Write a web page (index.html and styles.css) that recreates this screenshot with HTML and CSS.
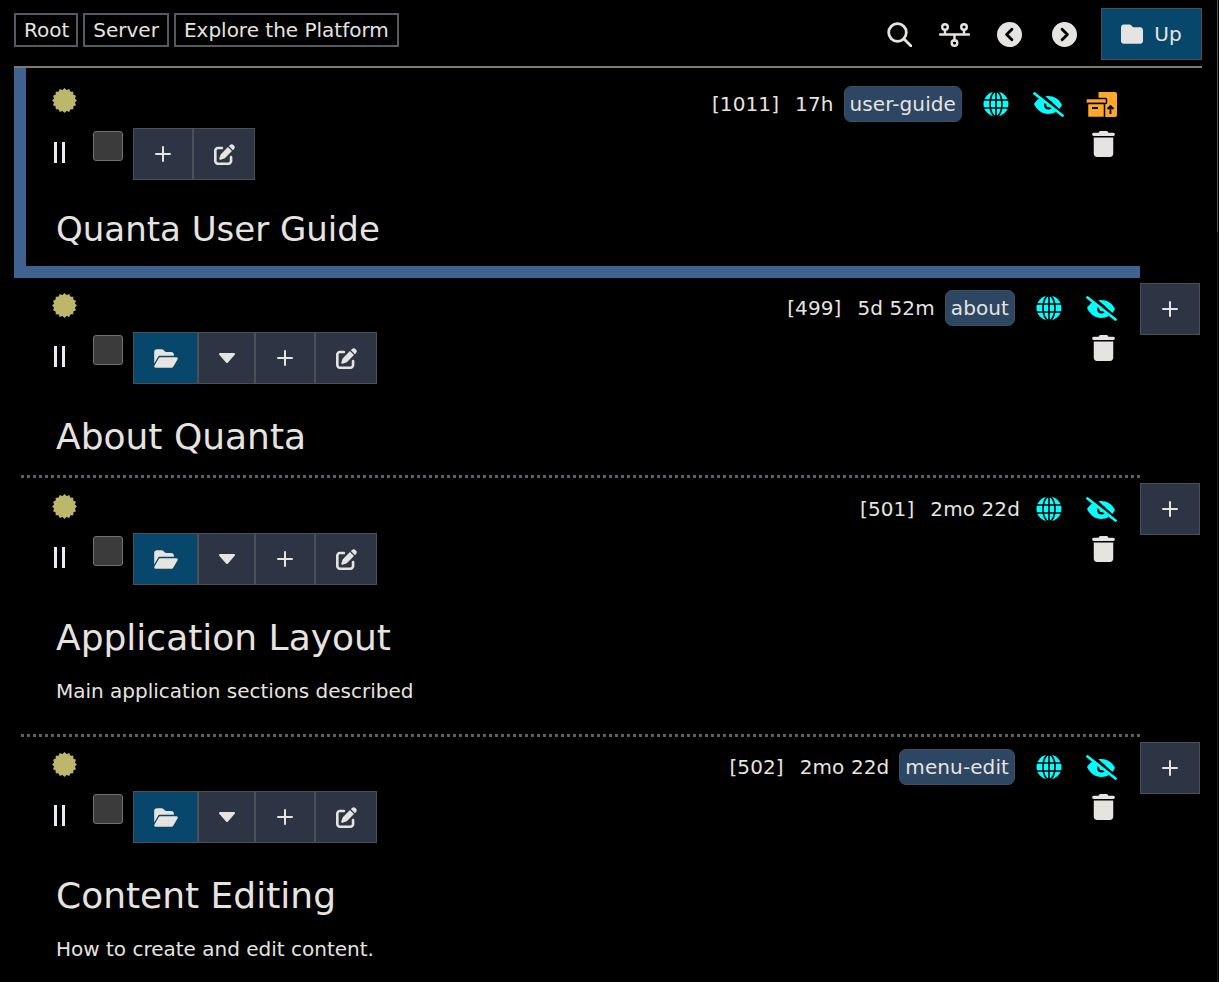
FILE: index.html
```html
<!DOCTYPE html>
<html lang="en">
<head>
    <meta charset="UTF-8">
    <title>Quanta User Guide</title>
    <link rel="stylesheet" href="styles.css">
</head>
<body>

<svg class="defs" width="0" height="0">
    <symbol id="star" viewBox="-12.5 -12.5 25 25">
        <circle r="10.5"/>
        <rect x="-8.800" y="-8.800" width="17.600" height="17.600"/>
        <rect x="-8.800" y="-8.800" width="17.600" height="17.600" transform="rotate(22.5)"/>
        <rect x="-8.800" y="-8.800" width="17.600" height="17.600" transform="rotate(45)"/>
        <rect x="-8.800" y="-8.800" width="17.600" height="17.600" transform="rotate(67.5)"/>
    </symbol>
    <symbol id="plus" viewBox="0 0 18 18">
        <path d="M9 2v14M2 9h14" fill="none" stroke="currentColor" stroke-width="2" stroke-linecap="round"/>
    </symbol>
    <symbol id="edit" viewBox="0 0 512 512">
        <path fill="currentColor" d="M471.6 21.7c-21.9-21.9-57.3-21.9-79.2 0L362.3 51.7l97.9 97.9 30.1-30.1c21.9-21.9 21.9-57.3 0-79.2L471.6 21.7zm-299.2 220c-6.1 6.1-10.8 13.6-13.5 21.9l-29.6 88.8c-2.9 8.6-.6 18.1 5.8 24.6s15.9 8.7 24.6 5.8l88.8-29.6c8.2-2.7 15.7-7.4 21.9-13.5L437.7 172.3 339.7 74.3 172.4 241.7zM96 64C43 64 0 107 0 160V416c0 53 43 96 96 96H352c53 0 96-43 96-96V320c0-17.7-14.3-32-32-32s-32 14.3-32 32v96c0 17.7-14.3 32-32 32H96c-17.7 0-32-14.3-32-32V160c0-17.7 14.3-32 32-32h96c17.7 0 32-14.3 32-32s-14.3-32-32-32H96z"/>
    </symbol>
    <symbol id="folder-open" viewBox="0 0 576 512">
        <path fill="currentColor" d="M88.7 223.8L0 375.8V96C0 60.7 28.7 32 64 32H181.5c17 0 33.3 6.7 45.3 18.7l26.5 26.5c12 12 28.3 18.7 45.3 18.7H416c35.3 0 64 28.7 64 64v32H144c-22.8 0-43.8 12.1-55.3 31.8zm27.6 16.1C122.1 230 132.6 224 144 224H544c11.5 0 22 6.1 27.7 16.1s5.7 22.2-.1 32.1l-112 192C453.9 474 443.4 480 432 480H32c-11.5 0-22-6.1-27.7-16.1s-5.7-22.2 .1-32.1l112-192z"/>
    </symbol>
    <symbol id="folder" viewBox="0 0 512 512">
        <path fill="currentColor" d="M64 480H448c35.3 0 64-28.7 64-64V160c0-35.3-28.7-64-64-64H288c-10.1 0-19.6-4.7-25.6-12.8L243.2 58.3C231.1 42.2 212.1 32 192 32H64C28.7 32 0 60.7 0 96V416c0 35.3 28.7 64 64 64z"/>
    </symbol>
    <symbol id="caret" viewBox="0 0 18 12">
        <path fill="currentColor" stroke="currentColor" stroke-width="2" stroke-linejoin="round" d="M2 2h14L9 10z"/>
    </symbol>
    <symbol id="trash" viewBox="0 0 448 512">
        <path fill="currentColor" d="M135.2 17.7C140.6 6.8 151.7 0 163.8 0H284.2c12.1 0 23.2 6.8 28.6 17.7L320 32h96c17.7 0 32 14.3 32 32s-14.3 32-32 32H32C14.3 96 0 81.7 0 64S14.3 32 32 32h96l7.2-14.3zM32 128H416V448c0 35.3-28.7 64-64 64H96c-35.3 0-64-28.7-64-64V128z"/>
    </symbol>
    <symbol id="globe" viewBox="0 0 26 26">
        <circle cx="13" cy="13" r="12.5" fill="#00ffff"/>
        <g fill="none" stroke="#000" stroke-width="1.6">
            <ellipse cx="13" cy="13" rx="6" ry="12.5"/>
            <path d="M13 0v26M1 9h24M1 17h24"/>
        </g>
    </symbol>
    <symbol id="eye" viewBox="0 0 31 25">
        <path fill="#00ffff" d="M1 12C4 7 9 4 15 4s11 3 14 9c-3 6-8 9-14 9S4 18 1 12z"/>
        <circle cx="15.500" cy="13" r="4.500" fill="#000"/>
        <circle cx="15.500" cy="13" r="2.200" fill="#00ffff"/>
        <path d="M2 -2L32 25" stroke="#000" stroke-width="4.500"/>
        <path d="M1.500 1.500L29.500 23.500" stroke="#00ffff" stroke-width="2.800" stroke-linecap="round"/>
    </symbol>
    <symbol id="archive" viewBox="0 0 31 25">
        <path fill="#ffa726" d="M12.500 0h16.500a2 2 0 0 1 2 2v21a2 2 0 0 1-2 2H12.500z"/>
        <path fill="none" stroke="#000" stroke-width="1.800" d="M24.500 22v-8M21.500 17l3-3 3 3"/>
        <rect x="0" y="6.500" width="20.500" height="5" rx="1" fill="#ffa726" stroke="#000" stroke-width="1.500"/>
        <rect x="1.500" y="11.500" width="17" height="14" rx="1" fill="#ffa726" stroke="#000" stroke-width="1.500"/>
        <path stroke="#000" stroke-width="2" d="M6 16h6"/>
    </symbol>
</svg>

<div class="scroll-track"><div class="scroll-thumb"></div></div>

<header class="top-bar">
    <nav class="crumbs">
        <a class="crumb">Root</a>
        <a class="crumb">Server</a>
        <a class="crumb">Explore the Platform</a>
    </nav>
    <div class="top-tools">
        <svg class="tool tool-search" viewBox="0 0 25 25" width="25" height="25">
            <circle cx="10.500" cy="10.500" r="8.800" fill="none" stroke="currentColor" stroke-width="2.800"/>
            <path d="M17 17l7 7" stroke="currentColor" stroke-width="2.800" stroke-linecap="round"/>
        </svg>
        <svg class="tool tool-tree" viewBox="0 0 31 24" width="31" height="24">
            <g fill="none" stroke="currentColor" stroke-width="2.400">
                <circle cx="6" cy="4" r="2.800"/>
                <circle cx="25" cy="4" r="2.800"/>
                <circle cx="15.500" cy="20" r="2.800"/>
                <path d="M1 11.500h29M6 7v4.500M25 7v4.500M15.500 11.500v5.500" stroke-linecap="round"/>
            </g>
        </svg>
        <svg class="tool tool-prev" viewBox="0 0 26 26" width="25" height="25">
            <circle cx="13" cy="13" r="13" fill="currentColor"/>
            <path d="M15.500 7.500L10 13l5.500 5.500" fill="none" stroke="#000" stroke-width="3" stroke-linecap="round" stroke-linejoin="round"/>
        </svg>
        <svg class="tool tool-next" viewBox="0 0 26 26" width="25" height="25">
            <circle cx="13" cy="13" r="13" fill="currentColor"/>
            <path d="M10.500 7.500L16 13l-5.500 5.500" fill="none" stroke="#000" stroke-width="3" stroke-linecap="round" stroke-linejoin="round"/>
        </svg>
        <button class="btn btn-up"><svg width="22" height="22"><use href="#folder"/></svg>Up</button>
    </div>
</header>

<main class="node-list">

    <div class="node-row">
        <section class="node node-current">
            <div class="node-head">
                <svg class="star" width="25" height="25"><use href="#star"/></svg>
                <div class="node-info">
                    <span>[1011]</span>
                    <span>17h</span>
                    <span class="tag">user-guide</span>
                    <svg class="info-globe" width="26" height="26"><use href="#globe"/></svg>
                    <svg class="info-eye" width="31" height="25"><use href="#eye"/></svg>
                    <svg class="info-archive" width="31" height="25"><use href="#archive"/></svg>
                </div>
            </div>
            <div class="node-tools">
                <span class="drag"></span>
                <span class="check"></span>
                <div class="btn-group">
                    <button class="btn btn-plus"><svg width="18" height="18"><use href="#plus"/></svg></button>
                    <button class="btn btn-edit"><svg width="21" height="21"><use href="#edit"/></svg></button>
                </div>
                <svg class="trash" width="23" height="26"><use href="#trash"/></svg>
            </div>
            <h2 class="node-title">Quanta User Guide</h2>
        </section>
    </div>

    <div class="node-row">
        <section class="node node-dotted">
            <div class="node-head">
                <svg class="star" width="25" height="25"><use href="#star"/></svg>
                <div class="node-info">
                    <span>[499]</span>
                    <span>5d 52m</span>
                    <span class="tag">about</span>
                    <svg class="info-globe" width="26" height="26"><use href="#globe"/></svg>
                    <svg class="info-eye" width="31" height="25"><use href="#eye"/></svg>
                </div>
            </div>
            <div class="node-tools">
                <span class="drag"></span>
                <span class="check"></span>
                <div class="btn-group">
                    <button class="btn btn-open"><svg width="24" height="21"><use href="#folder-open"/></svg></button>
                    <button class="btn btn-caret"><svg width="18" height="12"><use href="#caret"/></svg></button>
                    <button class="btn btn-plus"><svg width="18" height="18"><use href="#plus"/></svg></button>
                    <button class="btn btn-edit"><svg width="21" height="21"><use href="#edit"/></svg></button>
                </div>
                <svg class="trash" width="23" height="26"><use href="#trash"/></svg>
            </div>
            <h2 class="node-title">About Quanta</h2>
        </section>
        <button class="btn btn-side"><svg width="18" height="18"><use href="#plus"/></svg></button>
    </div>

    <div class="node-row">
        <section class="node node-dotted node-mid">
            <div class="node-head">
                <svg class="star" width="25" height="25"><use href="#star"/></svg>
                <div class="node-info">
                    <span>[501]</span>
                    <span>2mo 22d</span>
                    <svg class="info-globe" width="26" height="26"><use href="#globe"/></svg>
                    <svg class="info-eye" width="31" height="25"><use href="#eye"/></svg>
                </div>
            </div>
            <div class="node-tools">
                <span class="drag"></span>
                <span class="check"></span>
                <div class="btn-group">
                    <button class="btn btn-open"><svg width="24" height="21"><use href="#folder-open"/></svg></button>
                    <button class="btn btn-caret"><svg width="18" height="12"><use href="#caret"/></svg></button>
                    <button class="btn btn-plus"><svg width="18" height="18"><use href="#plus"/></svg></button>
                    <button class="btn btn-edit"><svg width="21" height="21"><use href="#edit"/></svg></button>
                </div>
                <svg class="trash" width="23" height="26"><use href="#trash"/></svg>
            </div>
            <h2 class="node-title">Application Layout</h2>
            <p class="node-desc">Main application sections described</p>
        </section>
        <button class="btn btn-side"><svg width="18" height="18"><use href="#plus"/></svg></button>
    </div>

    <div class="node-row">
        <section class="node node-dotted">
            <div class="node-head">
                <svg class="star" width="25" height="25"><use href="#star"/></svg>
                <div class="node-info">
                    <span>[502]</span>
                    <span>2mo 22d</span>
                    <span class="tag">menu-edit</span>
                    <svg class="info-globe" width="26" height="26"><use href="#globe"/></svg>
                    <svg class="info-eye" width="31" height="25"><use href="#eye"/></svg>
                </div>
            </div>
            <div class="node-tools">
                <span class="drag"></span>
                <span class="check"></span>
                <div class="btn-group">
                    <button class="btn btn-open"><svg width="24" height="21"><use href="#folder-open"/></svg></button>
                    <button class="btn btn-caret"><svg width="18" height="12"><use href="#caret"/></svg></button>
                    <button class="btn btn-plus"><svg width="18" height="18"><use href="#plus"/></svg></button>
                    <button class="btn btn-edit"><svg width="21" height="21"><use href="#edit"/></svg></button>
                </div>
                <svg class="trash" width="23" height="26"><use href="#trash"/></svg>
            </div>
            <h2 class="node-title">Content Editing</h2>
            <p class="node-desc">How to create and edit content.</p>
        </section>
        <button class="btn btn-side"><svg width="18" height="18"><use href="#plus"/></svg></button>
    </div>

</main>

</body>
</html>
```

FILE: styles.css
```css
html, body {
    height: 100%;
    overflow: hidden;
}

body {
    margin: 0;
    padding: 8px 17px 0 14px;
    box-sizing: border-box;
    background-color: #000;
    color: #e6e4e0;
    font-family: "DejaVu Sans", sans-serif;
    font-size: 20px;
}

svg {
    display: block;
    flex: none;
}

.defs {
    position: absolute;
}

.scroll-track {
    position: fixed;
    top: 0;
    right: 1px;
    bottom: 0;
    width: 1px;
    background-color: #1c1c1c;
}

.scroll-thumb {
    height: 232px;
    background-color: #555;
}

.top-bar {
    display: flex;
    justify-content: space-between;
    height: 60px;
    box-sizing: border-box;
    border-bottom: 2px solid #7d7a70;
}

.crumbs {
    display: flex;
    gap: 5px;
    margin-top: 5px;
    height: 34px;
}

.crumb {
    display: flex;
    align-items: center;
    padding: 0 8px;
    border: 2px solid #555a60;
}

.crumb:first-child {
    padding-right: 7px;
}

.top-tools {
    display: flex;
    align-items: flex-start;
}

.tool {
    margin-top: 14px;
}

.tool-search {
    margin-right: 27px;
}

.tool-tree {
    margin-top: 15px;
    margin-right: 27px;
}

.tool-prev {
    margin-right: 30px;
}

.tool-next {
    margin-right: 24px;
}

.btn {
    display: flex;
    align-items: center;
    justify-content: center;
    height: 52px;
    padding: 0;
    box-sizing: border-box;
    border: 1px solid #4a5058;
    background-color: #2d3544;
    color: #e6e4e0;
    font: inherit;
}

.btn-up {
    width: 101px;
    gap: 11px;
    background-color: #07476b;
}

.btn-open {
    width: 65px;
    background-color: #07476b;
}

.btn-caret {
    width: 57px;
}

.btn-plus {
    width: 60px;
}

.btn-edit {
    width: 62px;
}

.btn-side {
    width: 60px;
    margin-top: 5px;
}

.btn-group {
    display: flex;
}

.node-row {
    display: flex;
}

.node {
    width: 1126px;
    flex: none;
    box-sizing: border-box;
    padding-right: 23px;
}

.node-current {
    height: 210px;
    padding-left: 26px;
    padding-top: 20px;
    border-left: 12px solid #3f6290;
    border-bottom: 12px solid #3f6290;
}

.node-dotted {
    width: 1119px;
    margin-left: 7px;
    padding-left: 31px;
    padding-top: 15px;
    padding-bottom: 3px;
    background: repeating-linear-gradient(90deg, #5a6068 0 3px, transparent 3px 6px) bottom / 100% 3px no-repeat;
}

.node-mid {
    padding-top: 16px;
}

.node-head {
    display: flex;
    justify-content: space-between;
    height: 39px;
}

.node-current .node-head {
    height: 40px;
}

.star {
    fill: #bdb76b;
}

.node-info {
    display: flex;
    align-items: center;
    height: 36px;
    margin-top: -3px;
    letter-spacing: 0.1px;
}

.node-current .node-info {
    margin-top: -2px;
}

.node-info span {
    margin-right: 16px;
}

.node-info .tag {
    margin-left: -6px;
    margin-right: 21px;
    padding: 0 5px;
    height: 36px;
    line-height: 34px;
    box-sizing: border-box;
    border: 1px solid #3f4f64;
    border-radius: 7px;
    background-color: #2d4662;
}

.info-globe {
    margin-right: 24px;
}

.info-archive {
    margin-left: 22px;
}

.node-tools {
    display: flex;
    align-items: flex-start;
}

.drag {
    width: 11px;
    height: 21px;
    margin-top: 14px;
    margin-left: 2px;
    margin-right: 28px;
    box-sizing: border-box;
    border-left: 3px solid #e6eef4;
    border-right: 3px solid #e6eef4;
}

.check {
    width: 30px;
    height: 30px;
    margin-top: 3px;
    margin-right: 10px;
    box-sizing: border-box;
    border: 1px solid #707070;
    border-radius: 3px;
    background-color: #3b3b3b;
}

.trash {
    margin-left: auto;
    margin-right: 2px;
    margin-top: 3px;
}

.node-title {
    margin: 31px 0 16px 4px;
    font-size: 36px;
    font-weight: 400;
    line-height: 44px;
}

.node-current .node-title {
    margin-top: 27px;
    font-size: 34px;
}

.node-desc {
    margin: 17px 0 29px 4px;
    line-height: 28px;
}
```
